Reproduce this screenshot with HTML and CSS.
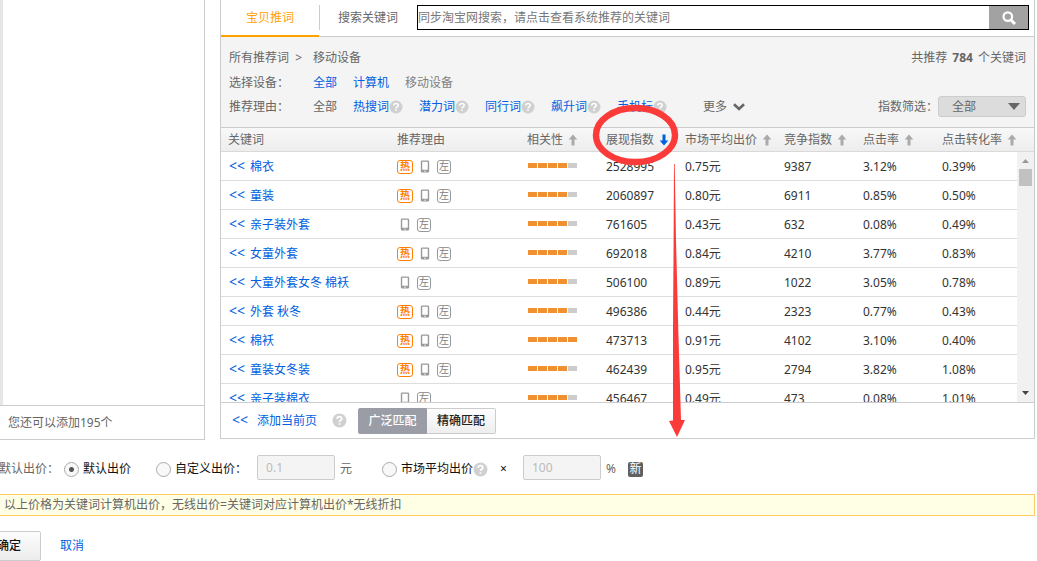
FILE: index.html
```html
<!DOCTYPE html>
<html lang="zh-CN">
<head>
<meta charset="utf-8">
<title>添加关键词</title>
<link rel="stylesheet" href="styles.css">
</head>
<body>
<svg class="defs" width="0" height="0" aria-hidden="true">
  <symbol id="help" viewBox="0 0 14 14"><circle cx="7" cy="7" r="6.5" fill="#d0d0d0"/><path d="M4.8 5.6C4.8 2.8 9.2 2.8 9.2 5.4C9.2 6.9 7 6.8 7 8.4M7 9.5V11" fill="none" stroke="#fff" stroke-width="1.6"/></symbol>
  <symbol id="arrow" viewBox="0 0 10 12"><path d="M5 0.5L9.3 5.5H6.5V11.5H3.5V5.5H0.7Z" fill="currentColor"/></symbol>
  <symbol id="phone" viewBox="0 0 10 14"><path fill-rule="evenodd" d="M2 0.5H8Q9.5 0.5 9.5 2V12Q9.5 13.5 8 13.5H2Q0.5 13.5 0.5 12V2Q0.5 0.5 2 0.5ZM2 2V10.5H8V2ZM4 11.5V12.5H6V11.5Z" fill="#999"/></symbol>
</svg>
<main class="top">
  <aside class="chosen">
    <div class="chosen-list"></div>
    <div class="chosen-foot">您还可以添加195个</div>
  </aside>
  <section class="panel">
    <header class="tabs">
      <button class="tab active" type="button">宝贝推词</button>
      <label class="tab-label" for="q">搜索关键词</label>
      <form class="search">
        <input id="q" type="text" placeholder="同步淘宝网搜索，请点击查看系统推荐的关键词">
        <button type="button" aria-label="搜索"><svg width="14" height="14" viewBox="0 0 14 14"><circle cx="5.8" cy="5.6" r="4.3" fill="none" stroke="#fff" stroke-width="2.2"/><path d="M9 9L13 13" stroke="#fff" stroke-width="3"/></svg></button>
      </form>
    </header>
    <div class="filters">
      <div class="frow"><span class="flabel">所有推荐词 &nbsp;&gt;</span><span>移动设备</span><span class="total">共推荐 <b>784</b> 个关键词</span></div>
      <div class="frow"><span class="flabel">选择设备<span class="colon">：</span></span><a href="#">全部</a><a href="#">计算机</a><span class="muted">移动设备</span></div>
      <div class="frow last"><span class="flabel">推荐理由<span class="colon">：</span></span><span>全部</span>
        <span class="hint"><a href="#">热搜词</a><svg><use href="#help"/></svg></span>
        <span class="hint"><a href="#">潜力词</a><svg><use href="#help"/></svg></span>
        <span class="hint"><a href="#">同行词</a><svg><use href="#help"/></svg></span>
        <span class="hint"><a href="#">飙升词</a><svg><use href="#help"/></svg></span>
        <span class="hint"><a href="#">手机标</a><svg><use href="#help"/></svg></span>
        <button class="more" type="button">更多<svg width="12" height="8" viewBox="0 0 12 8"><path d="M1 1.2L6 6L11 1.2" fill="none" stroke="#666" stroke-width="2.6"/></svg></button>
        <span class="index"><label for="idx">指数筛选<span class="colon">：</span></label><span class="select"><select id="idx"><option>全部</option></select><svg width="12" height="7" viewBox="0 0 12 7"><path d="M0 0H12L6 7Z" fill="#666"/></svg></span></span>
      </div>
    </div>
    <div class="thead">
      <table class="grid">
        <colgroup><col><col class="c-reason"><col class="c-n"><col class="c-n"><col class="c-price"><col class="c-n"><col class="c-n"><col class="c-last"></colgroup>
        <thead><tr>
          <th>关键词</th><th>推荐理由</th>
          <th>相关性<svg><use href="#arrow"/></svg></th>
          <th>展现指数<svg class="down"><use href="#arrow"/></svg></th>
          <th>市场平均出价<svg><use href="#arrow"/></svg></th>
          <th>竞争指数<svg><use href="#arrow"/></svg></th>
          <th>点击率<svg><use href="#arrow"/></svg></th>
          <th>点击转化率<svg><use href="#arrow"/></svg></th>
        </tr></thead>
      </table>
    </div>
    <div class="tbody">
      <table class="grid">
        <colgroup><col><col class="c-reason"><col class="c-n"><col class="c-n"><col class="c-price"><col class="c-n"><col class="c-n"><col class="c-last"></colgroup>
        <tbody id="rows"></tbody>
      </table>
      <div class="scroll"><svg width="7" height="4" viewBox="0 0 7 4"><path d="M0 4L3.5 0L7 4Z" fill="#999"/></svg><i></i><svg class="end" width="7" height="4" viewBox="0 0 7 4"><path d="M0 0H7L3.5 4Z" fill="#444"/></svg></div>
    </div>
    <footer class="pfoot">
      <a href="#"><span class="lt">&lt;&lt;</span>添加当前页</a>
      <svg class="help-lg"><use href="#help"/></svg>
      <div class="match"><button class="on" type="button">广泛匹配</button><button type="button">精确匹配</button></div>
    </footer>
  </section>
</main>
<form class="bid">
  <span class="bid-title">默认出价<span class="colon">：</span></span>
  <label class="opt o1"><input type="radio" name="bid" checked>默认出价</label>
  <label class="opt o2"><input type="radio" name="bid"><span>自定义出价<span class="colon">：</span></span></label>
  <input class="num" type="text" value="0.1" disabled aria-label="自定义出价">
  <span class="unit">元</span>
  <label class="opt o3"><input type="radio" name="bid">市场平均出价</label>
  <svg class="help-lg"><use href="#help"/></svg>
  <span class="times">×</span>
  <input class="num" type="text" value="100" disabled aria-label="百分比">
  <span class="unit">%</span>
  <span class="new">新</span>
</form>
<p class="notice">以上价格为关键词计算机出价<span class="colon">，</span>无线出价=关键词对应计算机出价*无线折扣</p>
<div class="actions"><button type="button">确定</button><a href="#">取消</a></div>
<svg class="mark" width="96" height="336" viewBox="590 103 96 336" aria-hidden="true"><ellipse cx="635.5" cy="135" rx="39.5" ry="27" fill="none" stroke="#fb3a3a" stroke-width="6.4"/><path d="M674 164L674.7 164L676 240L678.3 330L681 420H685L677 437L669 421L673 420.5L673 330L673.6 240Z" fill="#fb3a3a"/></svg>
<script src="rows.js"></script>
</body>
</html>
```
FILE: styles.css
```css
* { box-sizing: border-box; }
body { margin: 0; background: #fff; color: #666; overflow: hidden; }
body, button, input, select { font: 12px/18px "Noto Sans", "Noto Sans CJK SC", sans-serif; }
a { color: #0060e0; text-decoration: none; }
button { cursor: pointer; white-space: nowrap; }
svg { flex: none; }
.defs { position: absolute; }
.colon { font-family: "Noto Sans CJK TC", sans-serif; line-height: 1; }

.top { display: flex; gap: 15px; padding-right: 2px; align-items: flex-start; }
.chosen { width: 205px; flex: none; border-right: 1px solid #ccc; border-bottom: 1px solid #ccc; }
.chosen-list { height: 405px; border-left: 3px solid #e6e6e6; }
.chosen-foot { border-top: 1px solid #ccc; padding: 8px 8px 7px; }

.panel { flex: 1; min-width: 0; border: 1px solid #ccc; border-top: 0; }
.tabs { display: flex; height: 37px; border-bottom: 1px solid #ccc; }
.tab { width: 98px; flex: none; border: 0; padding: 0; background: none; color: #ffa200; border-bottom: 2px solid #ffa200; margin-bottom: -1px; }
.tab-label { border-left: 1px solid #ccc; margin: 5px 19px 6px 0; padding: 4px 0 0 18px; white-space: nowrap; }
.search { display: flex; flex: 1; height: 25px; margin: 5px 5px 0 0; border: 1px solid #000; }
.search input { flex: 1; min-width: 0; border: 0; padding: 0; outline: 0; }
.search input::placeholder { color: #777; }
.search button { width: 39px; border: 0; padding: 0; background: #a2a2a2; display: flex; align-items: center; justify-content: center; }

.filters { background: #f4f4f4; padding: 8px 8px 9px 8px; border-bottom: 1px solid #ccc; }
.frow { display: flex; align-items: center; gap: 16px; height: 25px; white-space: nowrap; }
.frow.last { height: 23px; }
.flabel { width: 68px; }
.muted { color: #808080; }
.total { margin-left: auto; }
.total b { margin: 0 2px; }
.hint { display: flex; align-items: center; }
.hint svg { width: 14px; height: 14px; }
.more { display: flex; align-items: center; gap: 6px; border: 0; padding: 0; background: none; color: #666; margin-left: 20px; }
.index { margin-left: auto; display: flex; align-items: center; }
.select { position: relative; width: 88px; }
.select select { appearance: none; width: 100%; height: 21px; border: 1px solid #ccc; border-radius: 3px; background: #dcdcdc; color: #666; padding: 0 13px; display: block; line-height: 19px; }
.select svg { position: absolute; right: 6px; top: 7px; pointer-events: none; }

.grid { width: 100%; table-layout: fixed; border-collapse: separate; border-spacing: 0; }
.grid th, .grid td { padding: 0 0 0 7px; text-align: left; font-weight: normal; white-space: nowrap; }
.c-reason { width: 130px; }
.c-n { width: 79px; }
.c-price { width: 99px; }
.c-last { width: 82px; }
.thead { padding-right: 17px; border-bottom: 1px solid #d9d9d9; background: linear-gradient(#f8f8f8, #ededed); }
.grid th { height: 23px; }
.grid th svg { width: 10px; height: 12px; margin-left: 5px; vertical-align: -2px; color: #aaa; }
.grid th svg.down { transform: rotate(180deg); color: #0060e0; }
.tbody { display: flex; align-items: flex-start; height: 251px; overflow: hidden; border-bottom: 1px solid #ccc; }
.grid td { height: 29px; padding-top: 1px; color: #333; border-bottom: 1px solid #ddd; }
.grid td:first-child { padding-left: 8px; }
.lt { display: inline-block; width: 21px; font-size: 14px; }
.tags { display: flex; gap: 6px; align-items: center; }
.tags svg { width: 10px; height: 13px; margin: 0 1px; }
.tags svg:first-child { margin-left: 3px; }
.tag { width: 14px; height: 14px; border: 1px solid #999; border-radius: 3px; color: #808080; font-size: 10px; line-height: 11px; text-align: center; }
.tag.hot { width: 16px; border-color: #ff8000; color: #ff8000; font-weight: bold; }
.bars { display: flex; gap: 1px; padding: 0 0 3px 1px; }
.bars i { width: 9px; height: 5px; background: #f09030; }
.bars i.off { background: #ccc; }
.scroll { width: 17px; height: 250px; flex: none; background: #f1f1f1; display: flex; flex-direction: column; align-items: center; padding: 7px 0; }
.scroll i { width: 13px; height: 17px; margin-top: 6px; background: #c1c1c1; }
.scroll .end { margin-top: auto; }
.pfoot { display: flex; align-items: center; height: 35px; padding-left: 11px; }
.pfoot .lt { width: 25px; }
.help-lg { width: 15px; height: 15px; }
.pfoot .help-lg { margin: 0 11px 0 15px; }
.match { display: flex; }
.match button { width: 69px; height: 26px; padding: 0; border: 1px solid #ccc; border-left: 0; border-radius: 0 2px 2px 0; background: linear-gradient(#fdfdfd, #eee); color: #222; font-weight: 500; }
.match .on { border: 1px solid #9a9da6; border-radius: 2px 0 0 2px; background: #9a9da6; color: #fff; }

.bid { display: flex; align-items: center; height: 26px; margin: 16px 0 0 -1px; white-space: nowrap; }
.bid-title { width: 65px; }
.opt { display: flex; align-items: center; gap: 4px; color: #111; }
.opt input { appearance: none; width: 15px; height: 15px; margin: 0; border: 1px solid #aaa; border-radius: 50%; background: #f8f8f8; }
.opt input:checked { background: radial-gradient(circle, #555 2px, #f8f8f8 3px); }
.o2 { margin-left: 25px; }
.num { width: 78px; height: 25px; margin: 0 0 3px 10px; border: 1px solid #ccc; border-radius: 2px; background: #f4f4f4; color: #bbb; padding: 0 8px; }
.unit { margin-left: 5px; }
.o3 { margin-left: 30px; }
.times { margin: 0 1px 0 12px; color: #111; }
.times + .num { margin-left: 15px; }
.new { margin-left: 12px; width: 15px; height: 15px; border-radius: 2px; background: #606060; color: #fff; line-height: 14px; text-align: center; }
.notice { margin: 12px 2px 0 0; padding: 1px 4px; border: 1px solid #fc6; border-left: 0; background: #ffffe5; line-height: 18px; }
.actions { display: flex; align-items: center; gap: 19px; margin: 15px 0 0 -29px; }
.actions button { width: 70px; height: 30px; padding: 0 20px 0 25px; text-align: left; border: 1px solid #ccc; border-radius: 2px; background: linear-gradient(#fdfdfd, #ececec); color: #111; font-weight: 500; }
.mark { position: absolute; left: 590px; top: 103px; pointer-events: none; }
```
FILE: rows.js
```js
const data = [
  ["棉衣", 1, 4, "2528995", "0.75", "9387", "3.12", "0.39"],
  ["童装", 1, 4, "2060897", "0.80", "6911", "0.85", "0.50"],
  ["亲子装外套", 0, 4, "761605", "0.43", "632", "0.08", "0.49"],
  ["女童外套", 1, 4, "692018", "0.84", "4210", "3.77", "0.83"],
  ["大童外套女冬 棉袄", 0, 4, "506100", "0.89", "1022", "3.05", "0.78"],
  ["外套 秋冬", 1, 4, "496386", "0.44", "2323", "0.77", "0.43"],
  ["棉袄", 1, 5, "473713", "0.91", "4102", "3.10", "0.40"],
  ["童装女冬装", 1, 4, "462439", "0.95", "2794", "3.82", "1.08"],
  ["亲子装棉衣", 0, 4, "456467", "0.49", "473", "0.08", "1.01"]
];
document.getElementById("rows").innerHTML = data.map(([word, hot, level, shows, price, rivals, ctr, cvr]) => `
  <tr>
    <td><a href="#"><span class="lt">&lt;&lt;</span>${word}</a></td>
    <td><div class="tags">${hot ? '<span class="tag hot">热</span>' : ""}<svg><use href="#phone"/></svg><span class="tag">左</span></div></td>
    <td><div class="bars">${[1, 2, 3, 4, 5].map(n => `<i class="${n > level ? "off" : ""}"></i>`).join("")}</div></td>
    <td>${shows}</td><td>${price}元</td><td>${rivals}</td><td>${ctr}%</td><td>${cvr}%</td>
  </tr>`).join("");
```
